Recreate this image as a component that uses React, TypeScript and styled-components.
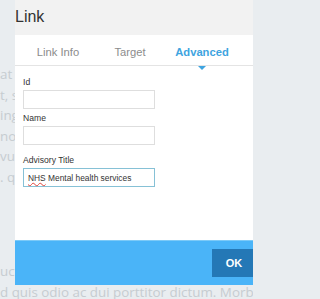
import React from 'react'
import styled, { createGlobalStyle } from 'styled-components'

const GlobalStyle = createGlobalStyle`
  html, body {
    margin: 0;
    padding: 0;
    background: #e9edf0;
  }
  body {
    width: 253px;
    height: 299px;
    overflow: hidden;
  }
`

const Page = styled.div`
  position: relative;
  width: 253px;
  height: 299px;
  overflow: hidden;
  background: #e9edf0;
`

const Paragraph = styled.p<{ $top: number }>`
  margin: 0;
  padding-top: ${p => p.$top}px;
  font-family: 'Open Sans', 'Liberation Sans', sans-serif;
  font-size: 13.4px;
  line-height: 20.5px;
  color: #c6ccd0;
  white-space: nowrap;
`

const Line = styled.span`
  display: block;
  height: 20.5px;
`

const Dialog = styled.div`
  position: absolute;
  top: 0;
  left: 15px;
  width: 250px;
  height: 285px;
  display: grid;
  grid-template-rows: 35px 31px 174px 45px;
  background: #fff;
  font-family: 'Liberation Sans', Arial, sans-serif;
`

const Header = styled.div`
  display: flex;
  align-items: center;
  background: #f2f2f2;
`

const Title = styled.h1`
  margin: 0;
  padding-bottom: 1px;
  font-size: 16px;
  font-weight: 400;
  color: #333;
`

const Tabs = styled.div`
  display: flex;
  padding-left: 7px;
  border-bottom: 1px solid #e4e4e4;
`

const Tab = styled.div<{ $active?: boolean }>`
  position: relative;
  width: 72px;
  display: flex;
  align-items: center;
  justify-content: center;
  padding-top: 4px;
  box-sizing: border-box;
  font-size: 11.2px;
  font-weight: ${p => (p.$active ? 700 : 400)};
  color: ${p => (p.$active ? '#3ea4e0' : '#8c8c8c')};

  ${p =>
    p.$active &&
    `
    &::after {
      content: '';
      position: absolute;
      left: 50%;
      bottom: -5px;
      margin-left: -4px;
      border-left: 4px solid transparent;
      border-right: 4px solid transparent;
      border-top: 4px solid #3ea4e0;
    }
  `}
`

const Body = styled.div`
  padding: 11px 0 0 8px;
`

const Field = styled.div<{ $gap: number }>`
  margin-top: ${p => p.$gap}px;
`

const Label = styled.div`
  font-size: 8.6px;
  line-height: 11px;
  color: #333;
  margin-bottom: 2px;
`

const TextBox = styled.div<{ $focused?: boolean }>`
  width: 132px;
  height: 19px;
  box-sizing: border-box;
  display: flex;
  align-items: center;
  padding-left: 4px;
  border: 1px solid ${p => (p.$focused ? '#86c1d6' : '#dedede')};
  background: #fff;
  font-size: 8.4px;
  color: #333;
  white-space: nowrap;
`

const Misspelled = styled.span`
  text-decoration: underline wavy #e0443a;
  text-decoration-thickness: 1px;
  text-underline-offset: 1px;
`

const Footer = styled.div`
  box-sizing: border-box;
  display: flex;
  justify-content: flex-end;
  align-items: flex-start;
  padding: 8px 9px 0 0;
  background: #4ab4f8;
  border-top: 1px solid #7ccaf8;
`

const OkButton = styled.button`
  width: 44px;
  height: 28px;
  border: 0;
  padding: 0;
  background: #2478b6;
  color: #fff;
  font-family: 'Liberation Sans', Arial, sans-serif;
  font-size: 11px;
  font-weight: 700;
`

const App: React.FC = () => {
  return (
    <>
      <GlobalStyle />
      <Page>
        <Paragraph $top={64}>
          <Line>at vitae lorem consequat</Line>
          <Line>t, sed do eiusmod tempor</Line>
          <Line>ing elit sed diam nonummy</Line>
          <Line>non tincidunt ut laoreet</Line>
          <Line>vulputate velit esse molestie</Line>
          <Line>. quam nulla facilisi</Line>
        </Paragraph>
        <Paragraph $top={74}>
          <Line>uctor aliquam erat volutpat</Line>
          <Line>d quis odio ac dui porttitor dictum. Morbi</Line>
        </Paragraph>

        <Dialog>
          <Header>
            <Title>Link</Title>
          </Header>

          <Tabs>
            <Tab>Link Info</Tab>
            <Tab>Target</Tab>
            <Tab $active>Advanced</Tab>
          </Tabs>

          <Body>
            <Field $gap={0}>
              <Label>Id</Label>
              <TextBox />
            </Field>
            <Field $gap={4}>
              <Label>Name</Label>
              <TextBox />
            </Field>
            <Field $gap={10}>
              <Label>Advisory Title</Label>
              <TextBox $focused>
                <Misspelled>NHS</Misspelled>&nbsp;Mental health services
              </TextBox>
            </Field>
          </Body>

          <Footer>
            <OkButton>OK</OkButton>
          </Footer>
        </Dialog>
      </Page>
    </>
  )
}

export default App
